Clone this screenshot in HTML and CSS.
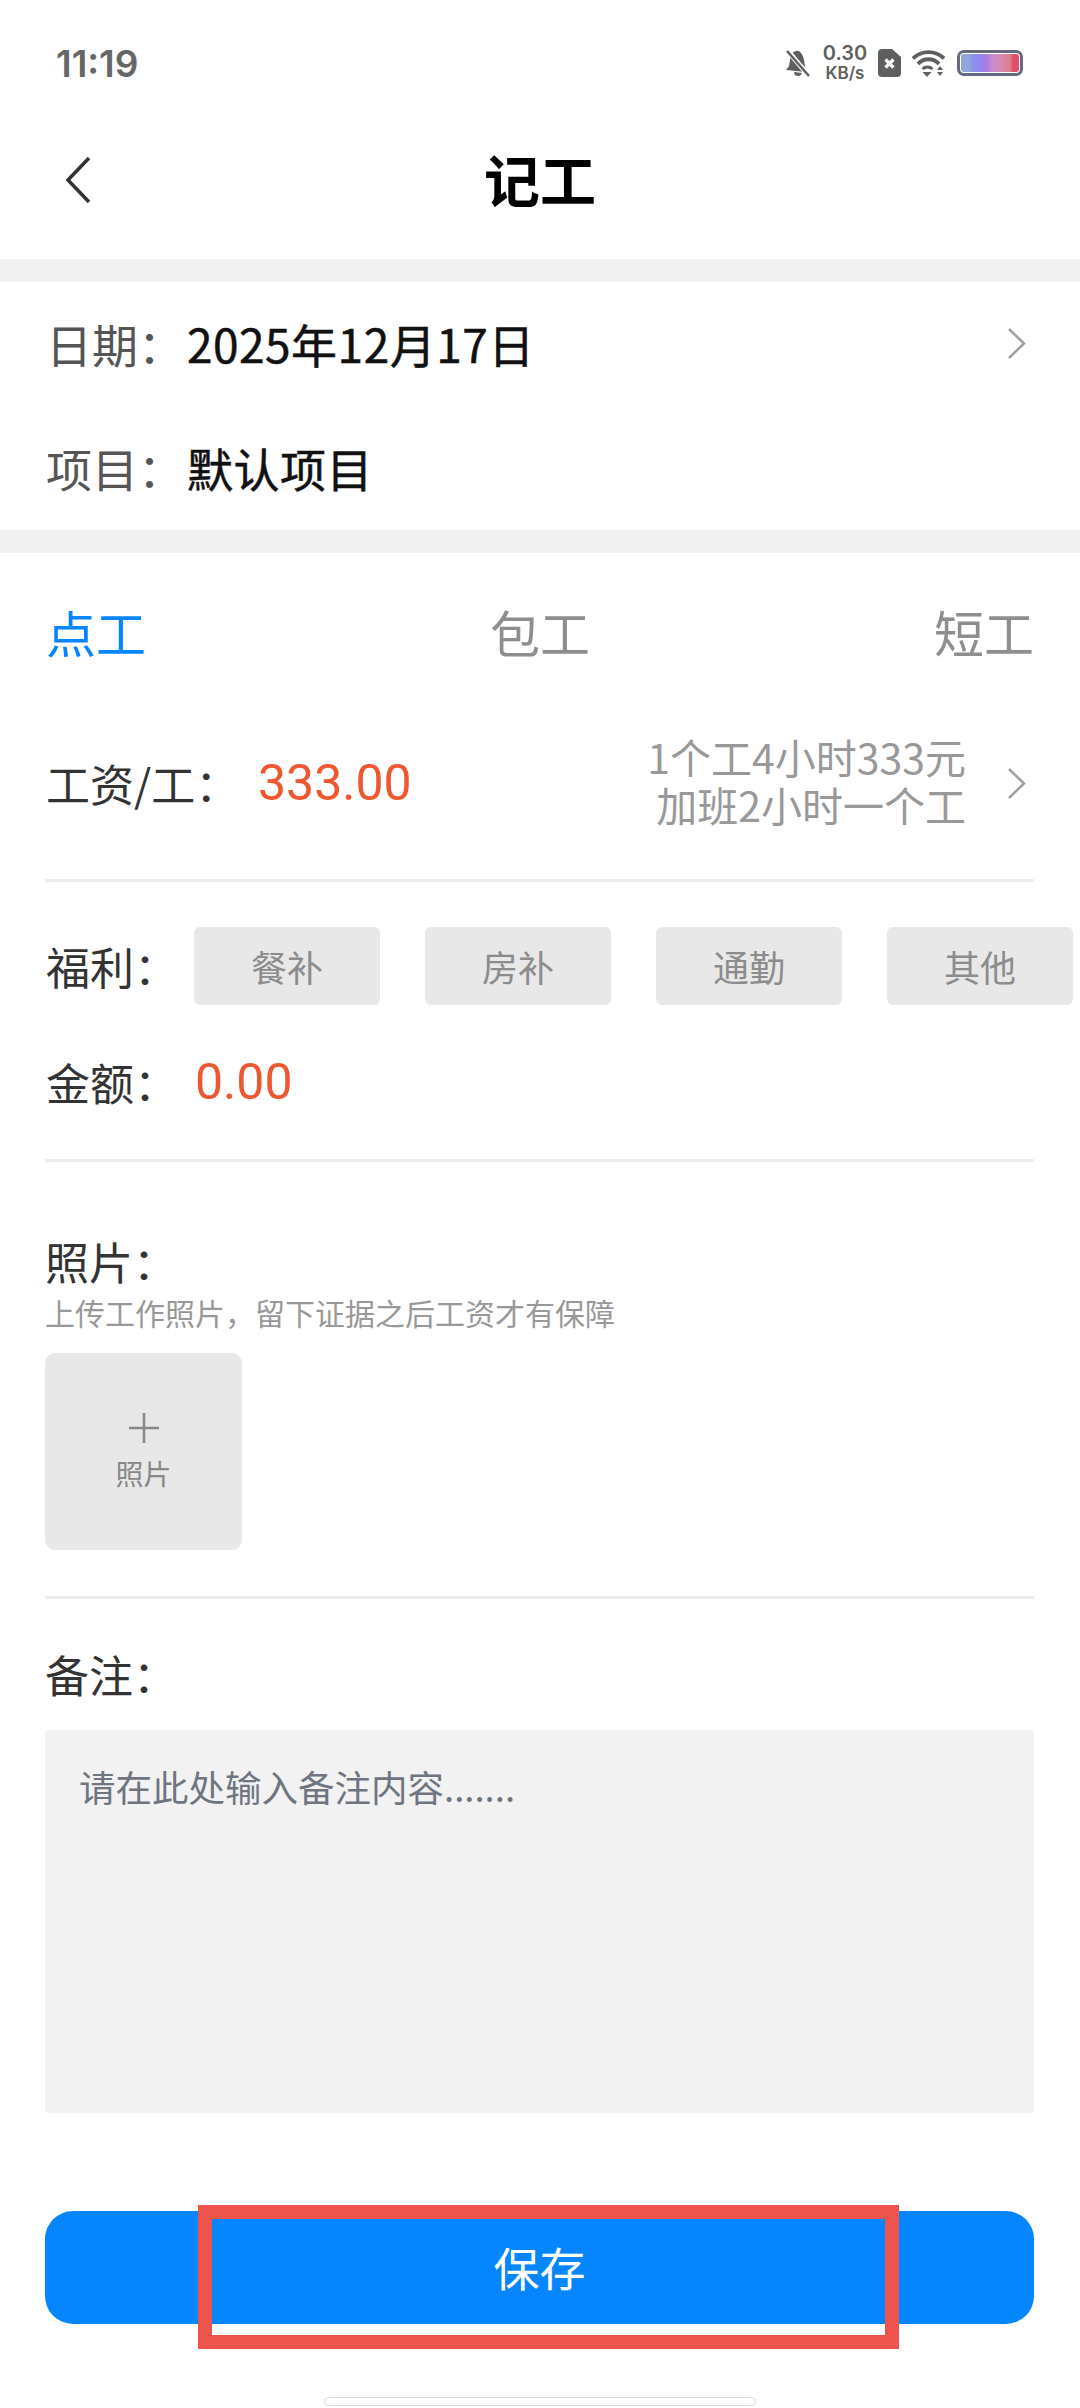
FILE: index.html
```html
<!DOCTYPE html>
<html lang="zh-CN">
<head>
    <meta charset="UTF-8">
    <meta name="viewport" content="width=device-width, initial-scale=1.0">
    <title>记工</title>
    <link rel="stylesheet" href="styles.css">
</head>
<body>
<div class="page">
    <div class="status-bar">
        <span class="time">11:19</span>
        <div class="status-icons">
            <svg class="ic-bell" width="24" height="27" viewBox="0 0 24 27">
                <path d="M10 1c-4 1-6 5-6 9l-1 6-3 4 20 2c0-2-1-3-1-5l-1-7c-1-5-4-10-8-9z" fill="#5f5f5f"/>
                <path d="M8 22c0 3 2 4 4 4s3-1 4-3z" fill="#5f5f5f"/>
                <path d="M1 0l22 26" stroke="#fff" stroke-width="5"/>
                <path d="M1 1l22 25" stroke="#5f5f5f" stroke-width="2.5"/>
            </svg>
            <div class="speed">
                <span class="speed-num">0.30</span>
                <span class="speed-unit">KB/s</span>
            </div>
            <svg width="23" height="28" viewBox="0 0 23 28">
                <path d="M4 0h10l9 8v16a4 4 0 0 1-4 4H4a4 4 0 0 1-4-4V4a4 4 0 0 1 4-4z" fill="#5f5f5f"/>
                <path d="M7.5 10.500l8 8M15.500 10.500l-8 8" stroke="#fff" stroke-width="3.200"/>
            </svg>
            <svg width="33" height="27" viewBox="0 0 33 27">
                <path d="M1 8.500a22 22 0 0 1 31 0" fill="none" stroke="#5f5f5f" stroke-width="3.800"/>
                <path d="M6 14a14 14 0 0 1 21 0" fill="none" stroke="#5f5f5f" stroke-width="3.800"/>
                <path d="M10.500 19a7.500 7.500 0 0 1 10 0" fill="none" stroke="#5f5f5f" stroke-width="3"/>
                <path d="M10.500 22h9l-4.500 5z" fill="#5f5f5f"/>
                <path d="M25 20l3-4 3 4zM25 22h6l-3 4z" fill="#5f5f5f"/>
            </svg>
            <div class="battery"><div class="battery-fill"></div></div>
        </div>
    </div>

    <div class="nav">
        <svg class="back" width="25" height="46" viewBox="0 0 25 46">
            <path d="M23 1L2 23l21 22" fill="none" stroke="#333" stroke-width="3.500"/>
        </svg>
        <h1 class="title">记工</h1>
    </div>

    <div class="band"></div>

    <div class="info-row date-row">
        <span class="info-label">日期：</span>
        <span class="info-value">2025年12月17日</span>
        <svg class="chevron" width="18" height="31" viewBox="0 0 18 31">
            <path d="M1 1l15 14.500L1 30" fill="none" stroke="#a0a0a0" stroke-width="2.500"/>
        </svg>
    </div>
    <div class="info-row project-row">
        <span class="info-label">项目：</span>
        <span class="info-value">默认项目</span>
    </div>

    <div class="band"></div>

    <div class="tabs">
        <span class="tab active">点工</span>
        <span class="tab">包工</span>
        <span class="tab">短工</span>
    </div>

    <div class="wage-row">
        <span class="label">工资/工：</span>
        <span class="money wage">333.00</span>
        <div class="rule">1个工4小时333元<br>加班2小时一个工</div>
        <svg class="chevron" width="18" height="31" viewBox="0 0 18 31">
            <path d="M1 1l15 14.500L1 30" fill="none" stroke="#a0a0a0" stroke-width="2.500"/>
        </svg>
    </div>
    <div class="line"></div>

    <div class="perk-row">
        <span class="label">福利：</span>
        <div class="chips">
            <span class="chip">餐补</span>
            <span class="chip">房补</span>
            <span class="chip">通勤</span>
            <span class="chip">其他</span>
        </div>
    </div>
    <div class="amount-row">
        <span class="label">金额：</span>
        <span class="money">0.00</span>
    </div>
    <div class="line"></div>

    <div class="photo-section">
        <div class="label">照片：</div>
        <div class="hint">上传工作照片，留下证据之后工资才有保障</div>
        <div class="photo-tile">
            <svg width="30" height="30" viewBox="0 0 30 30">
                <path d="M15 0v30M0 15h30" stroke="#888" stroke-width="2.500"/>
            </svg>
            <span class="photo-text">照片</span>
        </div>
    </div>
    <div class="line"></div>

    <div class="note-section">
        <div class="label">备注：</div>
        <div class="note-box">请在此处输入备注内容.......</div>
    </div>

    <div class="save-wrap">
        <button class="save">保存</button>
        <div class="mark"></div>
    </div>

    <div class="home-bar"></div>
</div>
</body>
</html>
```

FILE: styles.css
```css
*{
    margin: 0px;
    padding: 0px;
    box-sizing: border-box;
}
body{
    background: #fff;
    font-family: "Noto Sans CJK SC", "Noto Sans", sans-serif;
    color: #333;
}
.page{
    width: 1080px;
    height: 2408px;
    overflow: hidden;
    display: flex;
    flex-direction: column;
}
.status-bar{
    height: 126px;
    padding: 0 57px 0 56px;
    display: flex;
    align-items: center;
    justify-content: space-between;
}
.time{
    font-family: "Inter", sans-serif;
    font-size: 37px;
    font-weight: 600;
    color: #666;
}
.status-icons{
    display: flex;
    align-items: center;
    gap: 11px;
}
.ic-bell{
    margin-right: 2px;
}
.speed{
    width: 44px;
    display: flex;
    flex-direction: column;
    align-items: center;
    font-family: "Inter", sans-serif;
    font-weight: 600;
    color: #5f5f5f;
    line-height: 20px;
    white-space: nowrap;
}
.speed-num{
    font-size: 20px;
}
.speed-unit{
    font-size: 17px;
}
.battery{
    width: 66px;
    height: 26px;
    margin-left: 1px;
    border: 3px solid #666a80;
    border-radius: 7px;
    padding: 1px;
}
.battery-fill{
    height: 100%;
    border-radius: 3px;
    background: linear-gradient(to right, #8fa6d8 14%, #8d8cf0 22%, #8d8cf0 30%, #a47fe0 38%, #a47fe0 44%, #cc8ccc 54%, #d48cb8 68%, #dd7f95 78%, #dd7f95 84%, #e04f66 90%, #e04f66 100%);
}
.nav{
    height: 133px;
    position: relative;
    display: flex;
    align-items: center;
    justify-content: center;
}
.back{
    position: absolute;
    left: 66px;
    top: 31px;
}
.title{
    font-size: 56px;
    font-weight: 700;
    color: #000;
    line-height: 1;
    margin-top: -30px;
}
.band{
    height: 23px;
    flex: none;
    background: #f1f1f1;
}
.info-row{
    padding: 0 46px;
    display: flex;
    align-items: center;
}
.date-row{
    height: 130px;
    padding-bottom: 8px;
}
.project-row{
    height: 118px;
    padding-bottom: 8px;
}
.info-label{
    font-size: 46px;
    color: #555;
    width: 141px;
}
.info-value{
    font-size: 46px;
    color: #111;
    letter-spacing: 0.5px;
    -webkit-text-stroke: 0.5px #111;
}
.chevron{
    margin-left: auto;
    flex: none;
}
.date-row .chevron{
    margin-right: 8px;
}
.tabs{
    height: 162px;
    padding: 0 46px 6px;
    display: flex;
    align-items: center;
    justify-content: space-between;
}
.tab{
    font-size: 50px;
    color: #8e8e8e;
}
.tab.active{
    color: #0586ff;
}
.label{
    font-size: 44px;
    color: #333;
}
.wage-row{
    height: 164px;
    padding: 0 46px 28px;
    display: flex;
    align-items: center;
}
.wage-row .label{
    width: 212px;
}
.money{
    font-size: 50px;
    font-family: "Roboto", sans-serif;
    color: #f0562f;
}
.rule{
    margin-left: auto;
    margin-bottom: 6px;
    font-size: 41px;
    line-height: 48px;
    color: #999;
    text-align: right;
    white-space: nowrap;
}
.wage-row .chevron{
    margin-left: 42px;
    margin-right: 8px;
}
.line{
    height: 3px;
    flex: none;
    margin: 0 46px 0 45px;
    background: #ececec;
}
.perk-row{
    padding: 45px 0 0 46px;
    display: flex;
    align-items: center;
    white-space: nowrap;
}
.perk-row .label{
    width: 148px;
}
.chips{
    display: flex;
    gap: 45px;
}
.chip{
    width: 186px;
    height: 78px;
    flex: none;
    border-radius: 6px;
    background: #e8e8e8;
    color: #8c8c8c;
    font-size: 36px;
    display: flex;
    align-items: center;
    justify-content: center;
}
.amount-row{
    height: 154px;
    padding: 0 46px;
    display: flex;
    align-items: center;
}
.amount-row .label{
    width: 149px;
}
.photo-section{
    padding: 68px 45px 46px;
}
.photo-section .label{
    line-height: 62px;
}
.hint{
    font-size: 30px;
    line-height: 40px;
    color: #999;
}
.photo-tile{
    margin-top: 21px;
    width: 197px;
    height: 197px;
    border-radius: 10px;
    background: #e8e8e8;
    display: flex;
    flex-direction: column;
    align-items: center;
    justify-content: center;
    gap: 12px;
}
.photo-text{
    font-size: 28px;
    line-height: 36px;
    color: #888;
}
.note-section{
    padding: 44px 46px 0 45px;
}
.note-section .label{
    line-height: 62px;
}
.note-box{
    margin-top: 25px;
    height: 383px;
    padding: 34px;
    border-radius: 4px;
    background: #f2f2f3;
    color: #6f7580;
    font-size: 36.5px;
    line-height: 46px;
}
.save-wrap{
    position: relative;
    margin: 98px 46px 0 45px;
}
.save{
    display: block;
    width: 100%;
    height: 113px;
    padding-bottom: 3px;
    border: none;
    border-radius: 28px;
    background: #0586ff;
    color: #fff;
    font-family: inherit;
    font-size: 46px;
}
.mark{
    position: absolute;
    left: 153px;
    top: -6px;
    width: 701px;
    height: 144px;
    border: 14px solid #ee544c;
}
.home-bar{
    width: 432px;
    height: 9px;
    flex: none;
    margin: 73px auto 0;
    border: 1px solid #ddd;
    border-radius: 5px;
    background: #fff;
}
```
